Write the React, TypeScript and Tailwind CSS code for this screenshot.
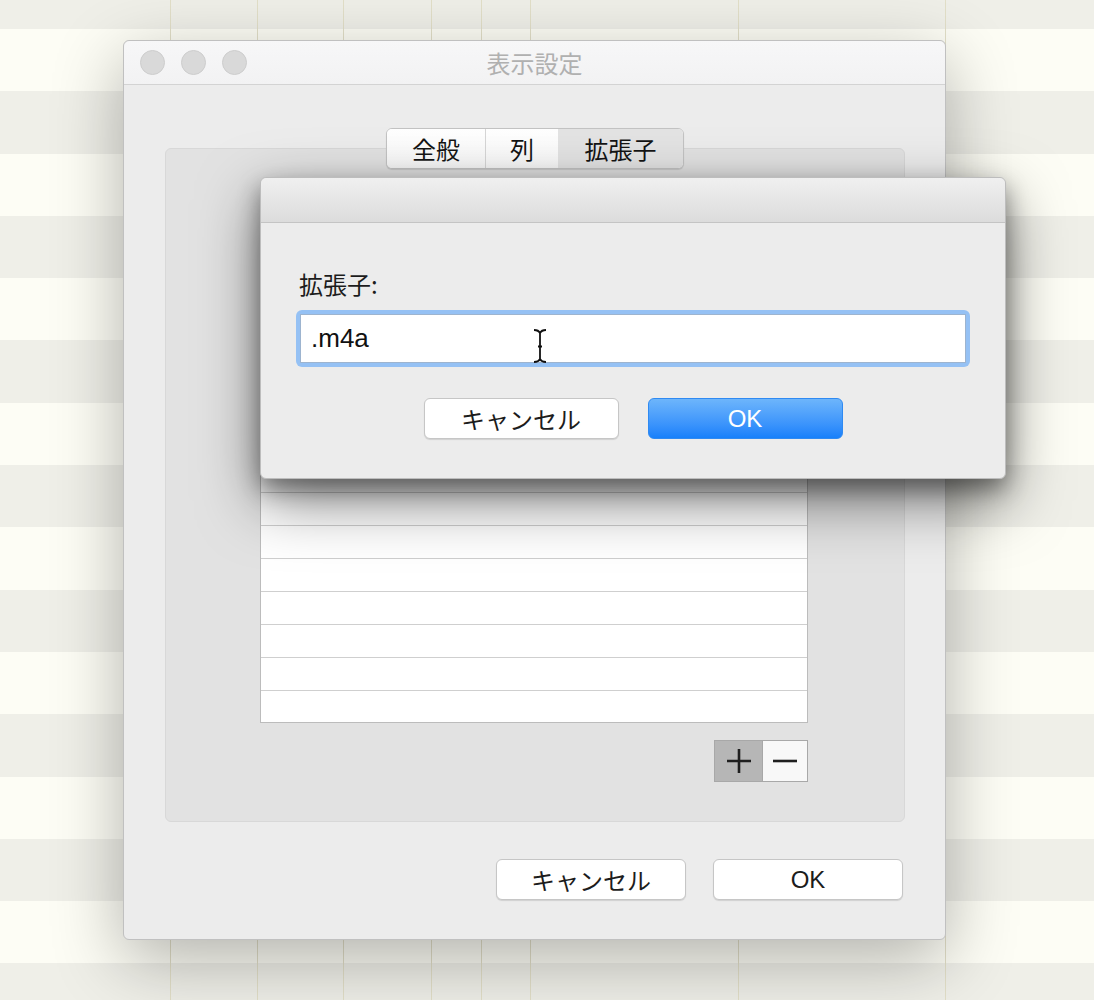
const stripes = Array.from({ length: 18 }, (_, i) => i % 2 === 0);

const gridCols = [87, 86, 88, 50, 49, 208, 207, 40];

function Backdrop() {
  return (
    <>
      <div className="absolute inset-0 -top-[33.3px] flex flex-col">
        {stripes.map((gray, i) => (
          <div
            key={i}
            className={gray ? "h-[62.3px] shrink-0 bg-[#efefe8]" : "h-[62.3px] shrink-0 bg-[#fdfdf5]"}
          />
        ))}
      </div>
      <div className="absolute inset-0 flex pl-[170px]">
        {gridCols.map((w, i) => (
          <div key={i} className="h-full shrink-0 border-l border-[#e2dfc8]" style={{ width: w }} />
        ))}
      </div>
    </>
  );
}

function IBeam() {
  return (
    <svg width="16" height="36" viewBox="0 0 16 36" className="absolute left-[236px] top-[18px]">
      <path
        d="M2 2 C5 2 7 3 8 5 C9 3 11 2 14 2 M8 5 L8 31 M8 31 C7 33 5 34 2 34 M8 31 C9 33 11 34 14 34 M6 18.5 L10 18.5"
        fill="none"
        stroke="#111"
        strokeWidth="1.8"
      />
    </svg>
  );
}

function ExtensionSheet() {
  return (
    <div className="absolute left-[136px] top-[136px] z-10 h-[302px] w-[746px] rounded-[6px] border border-[#bdbdbd] bg-[#ececec] shadow-[0_10px_22px_rgba(0,0,0,0.38),0_22px_60px_rgba(0,0,0,0.5)]">
      <div className="h-[45px] rounded-t-[6px] border-b border-[#c4c4c4] bg-gradient-to-b from-[#f0f0f0] to-[#dcdcdc]" />
      <div className="px-[35px] pt-[47px]">
        <div className="pl-[3px] text-[24px] leading-[28px] text-[#1c1c1c]">拡張子:</div>
        <div className="relative mt-[12px] h-[57px] rounded-[6px] bg-[#95c1f4] p-[4px]">
          <div className="flex h-full items-center border border-[#9db4cf] bg-white pl-[10px] font-['Liberation_Sans',sans-serif] text-[26px] text-[#111]">
            .m4a
          </div>
          <IBeam />
        </div>
        <div className="mt-[31px] flex justify-center gap-[29px]">
          <button className="h-[41px] w-[195px] rounded-[6px] border border-[#c6c6c6] bg-white text-[24px] leading-none text-[#1c1c1c] shadow-[0_1px_1px_rgba(0,0,0,0.12)]">
            キャンセル
          </button>
          <button className="h-[41px] w-[195px] rounded-[6px] border border-[#2f8af2] bg-gradient-to-b from-[#6db5fb] to-[#1680fb] font-['Liberation_Sans',sans-serif] text-[24px] leading-none text-white">
            OK
          </button>
        </div>
      </div>
    </div>
  );
}

function Tabs() {
  return (
    <div className="absolute left-[220px] top-[-21px] flex h-[41px] w-[298px] overflow-hidden rounded-[6px] border border-[#c3c3c3] bg-white text-[24px] text-[#141414] shadow-[0_1px_1px_rgba(0,0,0,0.12)]">
      <div className="flex w-[99px] items-center justify-center border-r border-[#d6d6d6] bg-gradient-to-b from-white to-[#f7f7f7]">全般</div>
      <div className="flex w-[72px] items-center justify-center bg-gradient-to-b from-white to-[#f7f7f7]">列</div>
      <div className="flex flex-1 items-center justify-center bg-[#e3e3e3]">拡張子</div>
    </div>
  );
}

function ExtensionTable() {
  const rows = Array.from({ length: 16 }, (_, i) => i);
  return (
    <div className="w-[548px]">
      <div className="divide-y divide-[#cfcfcf] border border-[#bcbcbc] bg-white">
        {rows.map((i) => (
          <div key={i} className={i === 15 ? "h-[31px]" : "h-[33px]"} />
        ))}
      </div>
      <div className="mt-[17px] flex justify-end">
        <div className="flex h-[42px] border border-[#a8a8a8]">
          <button className="flex w-[48px] items-center justify-center border-r border-[#a8a8a8] bg-[#b6b6b6]">
            <svg width="26" height="26" viewBox="0 0 26 26">
              <path d="M1 13 H25 M13 1 V25" stroke="#1f1f1f" strokeWidth="2.6" />
            </svg>
          </button>
          <button className="flex w-[44px] items-center justify-center bg-[#f8f8f8]">
            <svg width="26" height="26" viewBox="0 0 26 26">
              <path d="M1 13 H25" stroke="#1f1f1f" strokeWidth="2.6" />
            </svg>
          </button>
        </div>
      </div>
    </div>
  );
}

export default function App() {
  return (
    <div className="relative h-[1000px] w-[1094px] overflow-hidden bg-[#fdfdf5] pl-[123px] pt-[40px] font-['Noto_Sans_CJK_JP',sans-serif]">
      <Backdrop />

      <div className="relative h-[900px] w-[823px] rounded-[6px] border border-[#c0c0c0] bg-[#ececec] shadow-[0_20px_70px_rgba(0,0,0,0.3)]">
        <div className="grid h-[44px] grid-cols-[1fr_auto_1fr] items-center rounded-t-[6px] border-b border-[#d3d3d3] bg-gradient-to-b from-[#f7f7f8] to-[#f2f2f3] px-[16px]">
          <div className="flex gap-[16px]">
            <span className="h-[25px] w-[25px] rounded-full border border-[#cdcdcd] bg-[#d9d9d9]" />
            <span className="h-[25px] w-[25px] rounded-full border border-[#cdcdcd] bg-[#d9d9d9]" />
            <span className="h-[25px] w-[25px] rounded-full border border-[#cdcdcd] bg-[#d9d9d9]" />
          </div>
          <div className="text-[24px] leading-none text-[#b0b0b0]">表示設定</div>
          <div />
        </div>

        <div className="pl-[41px] pr-[40px] pt-[63px]">
          <div className="relative h-[674px] w-[740px] rounded-[6px] border border-[#d8d8d8] bg-[#e2e2e2] pl-[94px] pt-[46px]">
            <Tabs />
            <ExtensionTable />
          </div>

          <div className="mt-[37px] flex justify-end gap-[27px] pr-[2px]">
            <button className="h-[41px] w-[190px] rounded-[6px] border border-[#c6c6c6] bg-white text-[24px] leading-none text-[#1c1c1c] shadow-[0_1px_1px_rgba(0,0,0,0.12)]">
              キャンセル
            </button>
            <button className="h-[41px] w-[190px] rounded-[6px] border border-[#c6c6c6] bg-white font-['Liberation_Sans',sans-serif] text-[24px] leading-none text-[#1c1c1c] shadow-[0_1px_1px_rgba(0,0,0,0.12)]">
              OK
            </button>
          </div>
        </div>

        <ExtensionSheet />
      </div>
    </div>
  );
}
